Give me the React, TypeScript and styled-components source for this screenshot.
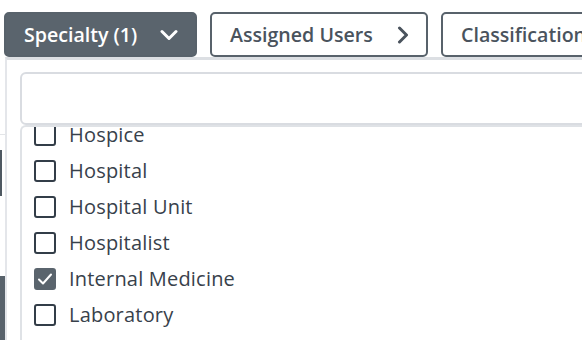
import { useState } from "react";
import styled, { createGlobalStyle } from "styled-components";

const GlobalStyle = createGlobalStyle`
  html, body {
    margin: 0;
    padding: 0;
    background: #ffffff;
  }
  body {
    font-family: "Open Sans", "Noto Sans", sans-serif;
    color: #38414b;
    overflow: hidden;
  }
`;

const specialties = [
  { label: "Hospice", checked: false },
  { label: "Hospital", checked: false },
  { label: "Hospital Unit", checked: false },
  { label: "Hospitalist", checked: false },
  { label: "Internal Medicine", checked: true },
  { label: "Laboratory", checked: false },
  { label: "Long Term Care", checked: false },
];

const ChevronDown = () => (
  <svg width="18" height="12" viewBox="0 0 18 12" fill="none">
    <path d="M2 2.5L9 9.5L16 2.5" stroke="currentColor" strokeWidth="3" strokeLinecap="round" strokeLinejoin="round" />
  </svg>
);

const ChevronRight = () => (
  <svg width="12" height="18" viewBox="0 0 12 18" fill="none">
    <path d="M2.5 2L9.5 9L2.5 16" stroke="currentColor" strokeWidth="3" strokeLinecap="round" strokeLinejoin="round" />
  </svg>
);

const CheckMark = () => (
  <svg width="16" height="14" viewBox="0 0 16 14" fill="none">
    <path d="M2 7.5L6 11.5L14 2.5" stroke="#ffffff" strokeWidth="2" strokeLinecap="round" strokeLinejoin="round" />
  </svg>
);

const App = () => {
  const [items, setItems] = useState(specialties);

  const toggle = (idx: number) => {
    setItems(items.map((it, i) => (i === idx ? { ...it, checked: !it.checked } : it)));
  };

  return (
    <>
      <GlobalStyle />
      <Page>
        <Toolbar>
          <FilterButton $active $width={193}>
            <span>Specialty (1)</span>
            <ChevronDown />
          </FilterButton>
          <FilterButton $width={218}>
            <span>Assigned Users</span>
            <ChevronRight />
          </FilterButton>
          <FilterButton $width={200}>
            <span>Classification</span>
          </FilterButton>
        </Toolbar>

        <Backdrop>
          <HeaderLine />
          <RowMarker />
          <FooterBlock />
        </Backdrop>

        <Dropdown>
          <SearchInput type="text" />
          <ListBox>
            <ListInner>
              {items.map((it, i) => (
                <Item key={it.label} onClick={() => toggle(i)}>
                  <Box $checked={it.checked}>{it.checked && <CheckMark />}</Box>
                  <Label>{it.label}</Label>
                </Item>
              ))}
            </ListInner>
          </ListBox>
        </Dropdown>
      </Page>
    </>
  );
};

export default App;

const Page = styled.div`
  position: relative;
  width: 582px;
  height: 340px;
  overflow: hidden;
`;

const Toolbar = styled.div`
  display: flex;
  gap: 13px;
  padding: 12px 0 0 4px;
  white-space: nowrap;
`;

const FilterButton = styled.button<{ $active?: boolean; $width: number }>`
  flex: none;
  display: flex;
  align-items: center;
  justify-content: space-between;
  box-sizing: border-box;
  width: ${(p) => p.$width}px;
  height: 45px;
  padding: 0 17px 0 18px;
  border-radius: 5px;
  border: 2px solid #58626b;
  background: ${(p) => (p.$active ? "#5a646d" : "#ffffff")};
  color: ${(p) => (p.$active ? "#ffffff" : "#4a535d")};
  font-family: "Open Sans", sans-serif;
  font-size: 19.6px;
  font-weight: 600;
  cursor: pointer;
`;

const Backdrop = styled.div`
  display: flex;
  flex-direction: column;
  padding-top: 77px;
`;

const HeaderLine = styled.div`
  height: 1px;
  background: #e3e5e8;
  margin-bottom: 15px;
`;

const RowMarker = styled.div`
  width: 2px;
  height: 46px;
  background: #4f5962;
  margin-bottom: 80px;
`;

const FooterBlock = styled.div`
  width: 8px;
  height: 70px;
  background: #58626b;
`;

const Dropdown = styled.div`
  position: absolute;
  left: 5px;
  top: 57px;
  width: 640px;
  height: 320px;
  box-sizing: border-box;
  background: #ffffff;
  border-top: 3px solid #dcdfe3;
  border-left: 2px solid #e4e6ea;
  padding: 12px 0 0 13px;
  display: flex;
  flex-direction: column;
`;

const SearchInput = styled.input`
  box-sizing: border-box;
  width: 100%;
  height: 53px;
  border: 2px solid #d9dce1;
  border-radius: 6px;
  outline: none;
  font-family: "Open Sans", sans-serif;
  font-size: 18px;
`;

const ListBox = styled.div`
  flex: 1;
  overflow: hidden;
  border-left: 2px solid #dfe2e6;
  border-top: 2px solid #dfe2e6;
  border-top-left-radius: 6px;
`;

const ListInner = styled.div`
  display: flex;
  flex-direction: column;
  margin-top: -10px;
  padding-left: 12px;
`;

const Item = styled.div`
  display: flex;
  align-items: center;
  gap: 13px;
  height: 36px;
  cursor: pointer;
`;

const Box = styled.span<{ $checked: boolean }>`
  box-sizing: border-box;
  width: 22px;
  height: 22px;
  display: flex;
  align-items: center;
  justify-content: center;
  border: 2px solid ${(p) => (p.$checked ? "#5a646d" : "#333d48")};
  border-radius: 3px;
  background: ${(p) => (p.$checked ? "#5a646d" : "#ffffff")};
`;

const Label = styled.span`
  font-size: 20px;
  letter-spacing: 0.2px;
  color: #38414b;
  line-height: 26px;
`;
